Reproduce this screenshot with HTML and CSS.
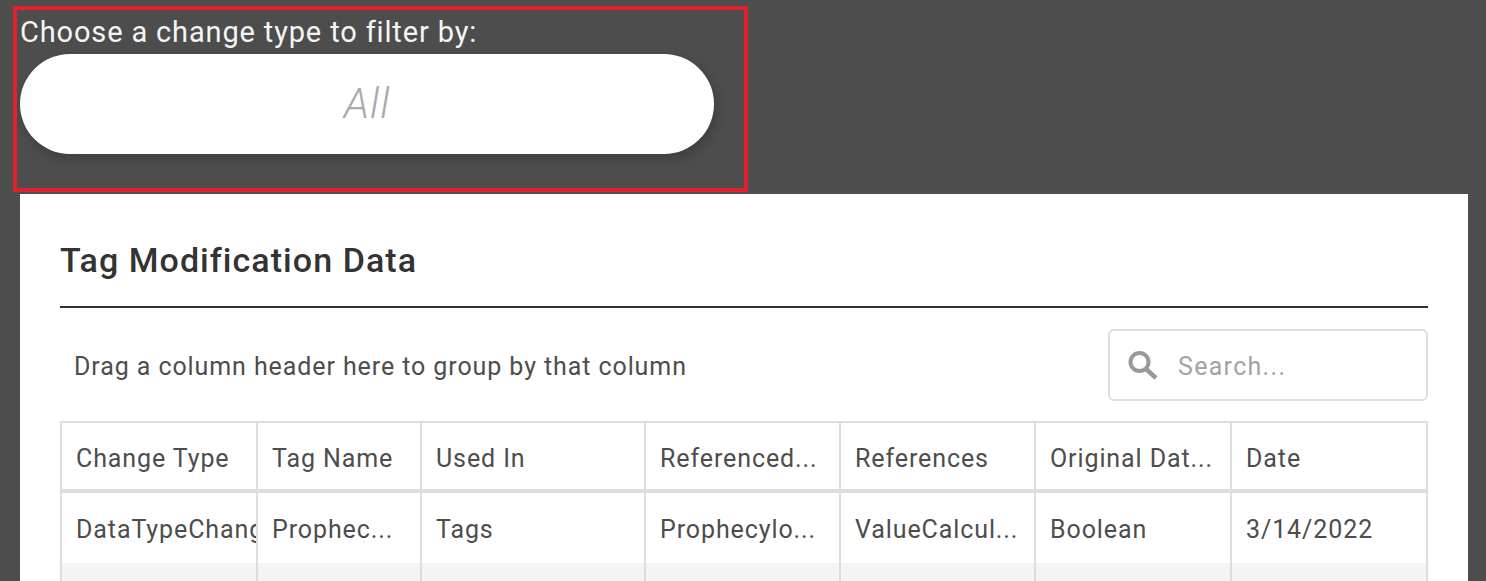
FILE: index.html
```html
<!DOCTYPE html>
<html lang="en">
<head>
<meta charset="utf-8">
<title>Tag Modification Data</title>
<link rel="stylesheet" href="styles.css">
</head>
<body>
<div class="page">
  <section class="filter">
    <div class="filter-outline"></div>
    <label class="filter-label">Choose a change type to filter by:</label>
    <div class="select">All</div>
  </section>
  <section class="card">
    <h2 class="card-title">Tag Modification Data</h2>
    <div class="toolbar">
      <span class="group-hint">Drag a column header here to group by that column</span>
      <div class="search">
        <svg class="search-icon" viewBox="0 0 32 32" width="32" height="32" aria-hidden="true">
          <circle cx="13.5" cy="13" r="9" fill="none" stroke="#999" stroke-width="4"/>
          <path d="M20 20l10 9" fill="none" stroke="#999" stroke-width="4.5"/>
        </svg>
        <span class="search-text">Search...</span>
      </div>
    </div>
    <div class="grid">
      <div class="row head">
        <div class="cell">Change Type</div>
        <div class="cell">Tag Name</div>
        <div class="cell">Used In</div>
        <div class="cell">Referenced...</div>
        <div class="cell">References</div>
        <div class="cell">Original Dat...</div>
        <div class="cell">Date</div>
      </div>
      <div class="row body-row">
        <div class="cell">DataTypeChange</div>
        <div class="cell">Prophec...</div>
        <div class="cell">Tags</div>
        <div class="cell">Prophecylo...</div>
        <div class="cell">ValueCalcul...</div>
        <div class="cell">Boolean</div>
        <div class="cell">3/14/2022</div>
      </div>
      <div class="row alt-row">
        <div class="cell"></div><div class="cell"></div><div class="cell"></div><div class="cell"></div><div class="cell"></div><div class="cell"></div><div class="cell"></div>
      </div>
    </div>
  </section>
</div>
</body>
</html>
```
FILE: styles.css
```css
html, body {
  margin: 0;
  height: 581px;
  overflow: hidden;
  background: #4d4d4d;
}
body {
  font-family: Roboto, "Liberation Sans", sans-serif;
  color: #4d4d4d;
}
.page {
  padding: 0 18px 0 20px;
}
.filter {
  position: relative;
  height: 194px;
  padding-top: 14px;
  box-sizing: border-box;
}
.filter-outline {
  position: absolute;
  left: -7px;
  top: 6px;
  width: 735px;
  height: 186px;
  box-sizing: border-box;
  border: 4px solid #e0202b;
  border-radius: 1px;
}
.filter-label {
  display: block;
  height: 40px;
  line-height: 37px;
  font-size: 29px;
  color: #f5f5f5;
  letter-spacing: 0.85px;
  white-space: nowrap;
}
.select {
  width: 694px;
  height: 100px;
  line-height: 100px;
  border-radius: 50px;
  background: #fff;
  box-shadow: 3px 5px 12px rgba(0, 0, 0, 0.2);
  text-align: center;
  font-size: 42px;
  font-style: italic;
  font-weight: 300;
  letter-spacing: 1px;
  color: #aaa;
}
.card {
  background: #fff;
  height: 387px;
  padding: 0 40px;
  overflow: hidden;
}
.card-title {
  margin: 0;
  height: 114px;
  padding-top: 42px;
  box-sizing: border-box;
  border-bottom: 2px solid #333;
  font-size: 34px;
  line-height: 48px;
  font-weight: 500;
  color: #333;
  letter-spacing: 1.05px;
}
.toolbar {
  display: flex;
  justify-content: space-between;
  align-items: center;
  height: 72px;
  margin-top: 21px;
  padding-left: 14px;
  font-size: 25px;
}
.group-hint {
  padding-top: 2px;
  white-space: nowrap;
  letter-spacing: 0.91px;
}
.search {
  display: flex;
  align-items: center;
  gap: 20px;
  width: 320px;
  height: 72px;
  box-sizing: border-box;
  padding-left: 16px;
  border: 2px solid #ddd;
  border-radius: 6px;
}
.search-text {
  padding-top: 2px;
  color: #a3a3a3;
  letter-spacing: 1.3px;
}
.grid {
  margin-top: 20px;
  border: solid #ddd;
  border-width: 2px 2px 0;
}
.row {
  display: grid;
  grid-template-columns: 196px 164px 224px 195px 195px 196px 1fr;
}
.cell {
  box-sizing: border-box;
  padding: 0 14px;
  border-right: 2px solid #ddd;
  overflow: hidden;
  white-space: nowrap;
  font-size: 25px;
  letter-spacing: 0.9px;
}
.cell:last-child {
  border-right: 0;
}
.head {
  height: 70px;
  line-height: 72px;
  border-bottom: 4px solid #ddd;
  box-sizing: border-box;
}
.body-row {
  height: 70px;
  line-height: 74px;
}
.alt-row {
  height: 40px;
  background: #f4f4f4;
}
```
